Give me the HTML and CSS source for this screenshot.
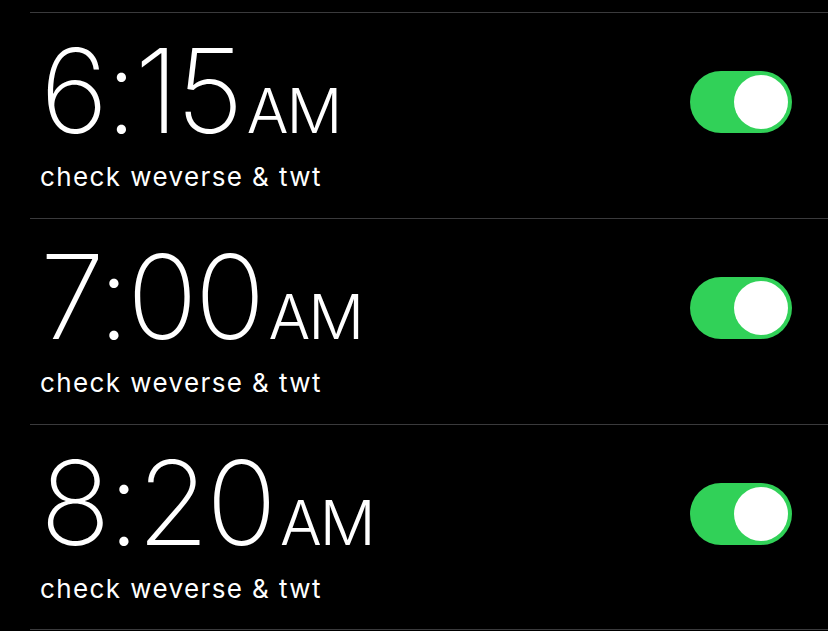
FILE: index.html
```html
<!DOCTYPE html>
<html lang="en">
<head>
<meta charset="utf-8">
<title>Alarms</title>
<link rel="stylesheet" href="styles.css">
</head>
<body>
  <ul class="alarm-list">
    <li class="alarm">
      <div class="alarm-info">
        <div class="alarm-time">6:15<span class="alarm-period">AM</span></div>
        <div class="alarm-label">check weverse &amp; twt</div>
      </div>
      <span class="switch is-on" role="switch" aria-checked="true"><span class="switch-knob"></span></span>
    </li>
    <li class="alarm">
      <div class="alarm-info">
        <div class="alarm-time">7:00<span class="alarm-period">AM</span></div>
        <div class="alarm-label">check weverse &amp; twt</div>
      </div>
      <span class="switch is-on" role="switch" aria-checked="true"><span class="switch-knob"></span></span>
    </li>
    <li class="alarm">
      <div class="alarm-info">
        <div class="alarm-time">8:20<span class="alarm-period">AM</span></div>
        <div class="alarm-label">check weverse &amp; twt</div>
      </div>
      <span class="switch is-on" role="switch" aria-checked="true"><span class="switch-knob"></span></span>
    </li>
  </ul>
</body>
</html>
```
FILE: styles.css
```css
html, body {
  margin: 0;
  padding: 0;
  background: #000;
  height: 100%;
  overflow: hidden;
}

body {
  color: #fff;
  font-family: Inter, Roboto, "Liberation Sans", sans-serif;
}

.alarm-list {
  list-style: none;
  margin: 0;
  padding: 12px 0 0 30px;
}

.alarm {
  box-sizing: border-box;
  height: 206px;
  border-top: 1px solid #3a3a3c;
  display: flex;
  align-items: flex-start;
  justify-content: space-between;
  padding: 0 36px 0 10px;
}

.alarm:last-child {
  border-bottom: 1px solid #3a3a3c;
}

.alarm-info {
  display: flex;
  flex-direction: column;
  padding-top: 19px;
}

.alarm-time {
  font-size: 117px;
  font-weight: 200;
  line-height: 1;
  letter-spacing: -3px;
}

.alarm-period {
  font-size: 62px;
  font-weight: 300;
  letter-spacing: -2px;
  margin-left: 6px;
}

.alarm-label {
  font-size: 26px;
  font-weight: 400;
  line-height: 1;
  letter-spacing: 1.4px;
  margin-top: 15px;
}

.switch {
  flex: none;
  position: relative;
  width: 102px;
  height: 62px;
  margin-top: 58px;
  border-radius: 31px;
  background: #31d158;
}

.switch-knob {
  position: absolute;
  top: 4px;
  right: 4px;
  width: 54px;
  height: 54px;
  border-radius: 50%;
  background: #fff;
}
```
